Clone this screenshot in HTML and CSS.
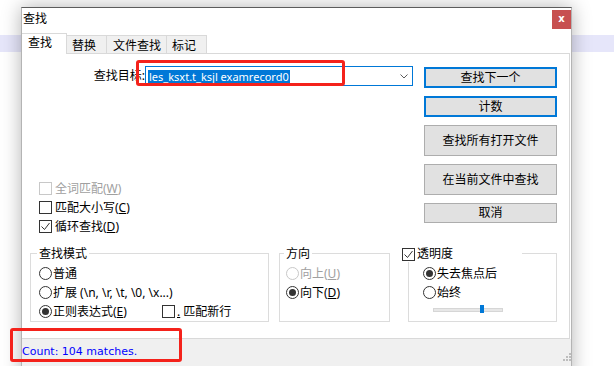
FILE: index.html
```html
<!DOCTYPE html>
<html lang="zh-CN">
<head>
<meta charset="utf-8">
<title>查找</title>
<link rel="stylesheet" href="styles.css">
</head>
<body>
<div class="band"></div>
<div class="win">
  <div class="titlebar">
    <span class="title">查找</span>
    <span class="close">x</span>
  </div>
  <div class="tabs">
    <div class="tab active">查找</div>
    <div class="tab t2">替换</div>
    <div class="tab t3">文件查找</div>
    <div class="tab t4">标记</div>
  </div>
  <div class="panel">
    <div class="top">
      <div class="leftcol">
        <div class="search">
          <span class="lbl">查找目标:</span>
          <div class="combo">
            <span class="sel">les_ksxt.t_ksjl examrecord0</span>
            <svg class="chev" width="8" height="5" viewBox="0 0 8 5"><polyline points="0.5,0.5 4,4 7.5,0.5" fill="none" stroke="#5c5c5c" stroke-width="1"/></svg>
          </div>
        </div>
        <div class="checks">
          <div class="row disabled"><span class="cb"></span>全词匹配(<u>W</u>)</div>
          <div class="row"><span class="cb"></span>匹配大小写(<u>C</u>)</div>
          <div class="row"><span class="cb"><svg width="11" height="11" viewBox="0 0 11 11"><polyline points="1.5,5.5 4.5,8.5 9.5,2" fill="none" stroke="#333" stroke-width="1"/></svg></span>循环查找(<u>D</u>)</div>
        </div>
      </div>
      <div class="btns">
        <div class="btn focus h21">查找下一个</div>
        <div class="btn focus h21">计数</div>
        <div class="btn h31">查找所有打开文件</div>
        <div class="btn h31">在当前文件中查找</div>
        <div class="btn h20">取消</div>
      </div>
    </div>
    <div class="groups">
      <div class="group g1">
        <div class="legend">查找模式</div>
        <div class="row"><span class="rb"></span>普通</div>
        <div class="row"><span class="rb"></span>扩展 (\n, \r, \t, \0, \x...)</div>
        <div class="row">
          <span class="item"><span class="rb on"></span>正则表达式(<u>E</u>)</span>
          <span class="cb"></span><u>.</u>&nbsp;匹配新行
        </div>
      </div>
      <div class="group g2">
        <div class="legend">方向</div>
        <div class="row disabled"><span class="rb"></span>向上(<u>U</u>)</div>
        <div class="row"><span class="rb on"></span>向下(<u>D</u>)</div>
      </div>
      <div class="group g3">
        <div class="gchk"><span class="cb"><svg width="11" height="11" viewBox="0 0 11 11"><polyline points="1.5,5.5 4.5,8.5 9.5,2" fill="none" stroke="#333" stroke-width="1"/></svg></span>透明度</div>
        <div class="row"><span class="rb on"></span>失去焦点后</div>
        <div class="row"><span class="rb"></span>始终</div>
        <div class="slider"><div class="track"><span class="thumb"></span></div></div>
      </div>
    </div>
  </div>
  <div class="status">
    <span class="count">Count: 104 matches.</span>
    <svg class="grip" width="8" height="8" viewBox="0 0 8 8">
      <rect x="6" y="0" width="2" height="2" fill="#bdbdbd"/>
      <rect x="3" y="3" width="2" height="2" fill="#bdbdbd"/>
      <rect x="6" y="3" width="2" height="2" fill="#bdbdbd"/>
      <rect x="0" y="6" width="2" height="2" fill="#bdbdbd"/>
      <rect x="3" y="6" width="2" height="2" fill="#bdbdbd"/>
      <rect x="6" y="6" width="2" height="2" fill="#bdbdbd"/>
    </svg>
  </div>
</div>
<div class="mark m1"></div>
<div class="mark m2"></div>
</body>
</html>
```

FILE: styles.css
```css
* { box-sizing: border-box; }
html, body { margin: 0; padding: 0; }
body {
  width: 614px;
  height: 366px;
  overflow: hidden;
  position: relative;
  background: #ffffff;
  font-family: "Noto Sans", "Noto Sans CJK SC", sans-serif;
  font-size: 12px;
  line-height: 16px;
  color: #000;
}
u { text-decoration: underline; text-underline-offset: 1px; }

.band { margin-top: 35px; height: 17px; background: #e6e6fa; }

.win {
  position: absolute;
  left: 21px;
  top: 7px;
  width: 551px;
  height: 372px;
  background: #fff;
  border: 1px solid #b4b4b4;
  border-top-color: #5c5c5c;
  box-shadow: 0 0 18px rgba(0,0,0,0.3);
  display: flex;
  flex-direction: column;
}

.titlebar { height: 25px; display: flex; align-items: flex-start; flex: none; }
.title { padding-left: 1px; margin-top: 3px; }
.close {
  margin-left: auto;
  margin-top: 2px;
  width: 19px; height: 19px;
  background: #c75050;
  color: #fff;
  font-family: "DejaVu Sans", sans-serif;
  font-weight: bold;
  font-size: 10px;
  line-height: 17px;
  text-align: center;
}

.tabs { height: 20px; display: flex; align-items: flex-end; flex: none; position: relative; z-index: 1; }
.tab {
  height: 18px;
  background: #f0f0f0;
  border: 1px solid #d9d9d9;
  border-left: none;
  border-bottom: none;
  padding: 2px 0 0 5px;
  line-height: 16px;
}
.tab.active {
  height: 21px;
  margin-bottom: -1px;
  width: 45px;
  background: #fff;
  padding: 1px 0 0 6px;
}
.t2 { width: 40px; }
.t3 { width: 60px; padding-left: 6px; }
.t4 { width: 40px; padding-left: 5px; }

.panel {
  height: 286px;
  flex: none;
  margin-right: 1px;
  border-top: 1px solid #d9d9d9;
  border-right: 1px solid #d9d9d9;
  border-bottom: 1px solid #d9d9d9;
  padding: 12px 12px 0 8px;
}
.top { display: flex; align-items: flex-start; }
.leftcol { flex: 1; }
.search { display: flex; height: 20px; align-items: center; }
.lbl { width: 115px; text-align: right; flex: none; }
.combo {
  width: 268px;
  height: 20px;
  border: 1px solid #0078d7;
  display: flex;
  align-items: center;
  padding-left: 2px;
}
.sel {
  background: #0078d7;
  color: #fff;
  height: 13px;
  line-height: 13px;
  padding: 0 1px 0 1px;
  font-size: 11px;
  white-space: nowrap;
}
.chev { margin-left: auto; margin-right: 4px; }

.checks { margin-top: 93px; }
.row { display: flex; align-items: center; height: 19px; white-space: nowrap; }
.checks .row .cb { margin-left: 9px; margin-right: 3px; }
.cb {
  width: 13px; height: 13px;
  border: 1px solid #333;
  background: #fff;
  flex: none;
  display: flex;
  align-items: center;
  justify-content: center;
}
.rb {
  width: 13px; height: 13px;
  border: 1px solid #333;
  border-radius: 50%;
  flex: none;
  margin-right: 1px;
  display: flex;
  align-items: center;
  justify-content: center;
}
.rb.on::after {
  content: "";
  width: 7px; height: 7px;
  border-radius: 50%;
  background: #333;
}
.disabled { color: #a0a0a0; }
.disabled .cb, .disabled .rb { border-color: #c8c8c8; }

.btns {
  width: 133px;
  margin-left: 11px;
  padding-top: 1px;
  display: flex;
  flex-direction: column;
  gap: 8px;
  flex: none;
}
.btn {
  background: #e1e1e1;
  border: 1px solid #adadad;
  display: flex;
  align-items: center;
  justify-content: center;
}
.btn.focus { border: 2px solid #0078d7; }
.h21 { height: 21px; }
.h31 { height: 31px; }
.h20 { height: 20px; }

.groups { display: flex; margin-top: 17px; }
.group {
  height: 69px;
  border: 1px solid #dcdcdc;
  display: flex;
  flex-direction: column;
}
.g1 { width: 239px; padding-left: 8px; }
.g2 { width: 111px; margin-left: 10px; padding-left: 6px; }
.g3 { width: 149px; margin-left: 18px; padding-left: 14px; }
.legend {
  margin-top: -8px;
  margin-left: -2px;
  margin-bottom: 2px;
  padding: 0 2px;
  height: 16px;
  background: #fff;
  align-self: flex-start;
}
.item { display: flex; align-items: center; width: 123px; }
.g1 .row .cb { margin-right: 2px; }

.gchk {
  margin-top: -8px;
  margin-left: -21px;
  margin-bottom: 2px;
  width: 120px;
  height: 16px;
  background: #fff;
  display: flex;
  align-items: center;
}
.gchk .cb { margin-right: 2px; }

.slider { height: 19px; padding-left: 10px; padding-top: 6px; }
.track {
  width: 70px;
  height: 4px;
  background: #e7e7e7;
  border: 1px solid #d6d6d6;
  position: relative;
}
.thumb {
  position: absolute;
  left: 46px;
  top: -4px;
  width: 4px;
  height: 8px;
  background: #0078d7;
}

.status {
  flex: 1;
  background: #f0f0f0;
  display: flex;
  align-items: flex-start;
  padding-top: 5px;
}
.count {
  font-family: "DejaVu Sans", sans-serif;
  font-size: 11px;
  line-height: 15px;
  color: #0000ff;
}
.grip { margin-left: auto; margin-top: 9px; }

.mark {
  position: absolute;
  border: 3px solid #f4221b;
  border-radius: 3px;
}
.m1 { left: 136px; top: 60px; width: 209px; height: 26px; }
.m2 { left: 10px; top: 328px; width: 172px; height: 34px; }
```
